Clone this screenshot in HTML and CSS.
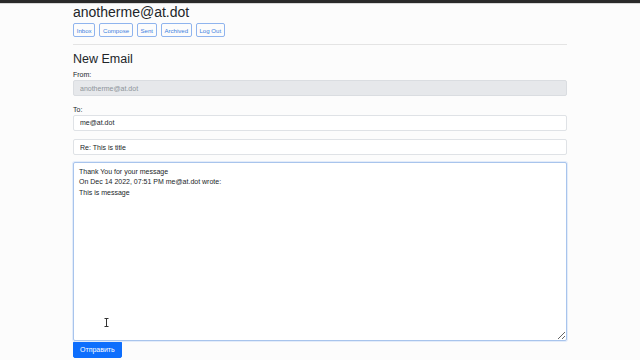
FILE: index.html
```html
<!DOCTYPE html>
<html>
<head>
<meta charset="utf-8">
<link rel="stylesheet" href="styles.css">
</head>
<body>
<div class="topbar"></div>
<div class="page">
  <h2 class="user">anotherme@at.dot</h2>
  <nav class="nav">
    <button class="btn-outline">Inbox</button>
    <button class="btn-outline">Compose</button>
    <button class="btn-outline">Sent</button>
    <button class="btn-outline">Archived</button>
    <button class="btn-outline">Log Out</button>
  </nav>
  <hr class="rule">
  <h3 class="heading">New Email</h3>
  <form class="form">
    <div class="group">
      <label class="label">From:</label>
      <input class="field field-disabled" value="anotherme@at.dot" disabled>
    </div>
    <div class="group">
      <label class="label">To:</label>
      <input class="field" value="me@at.dot">
    </div>
    <input class="field" value="Re: This is title">
    <div class="area-wrap">
      <textarea class="area">Thank You for your message
On Dec 14 2022, 07:51 PM me@at.dot wrote:
This is message</textarea>
      <svg class="ibeam" width="5" height="9" viewBox="0 0 5 9"><path d="M0.5 0.5h4M2.5 0.5v8M0.5 8.5h4" stroke="#333" stroke-width="1" fill="none"/></svg>
    </div>
    <button class="btn-primary" type="button">Отправить</button>
  </form>
</div>
</body>
</html>
```
FILE: styles.css
```css
html, body {
  margin: 0;
  padding: 0;
}
body {
  background: #fcfcfc;
  font-family: "Liberation Sans", Arial, sans-serif;
  color: #212529;
  width: 640px;
  height: 360px;
  overflow: hidden;
}
.topbar {
  height: 3px;
  background: #2a2a2a;
  border-bottom: 1px solid #d8d8d8;
}
.page {
  margin-left: 73px;
  width: 494px;
}
.user {
  margin: 0;
  font-size: 14px;
  font-weight: 400;
  line-height: 17px;
}
.nav {
  display: flex;
  gap: 4px;
  margin-top: 2px;
}
.btn-outline {
  height: 14px;
  padding: 0 2.7px;
  font-family: inherit;
  font-size: 6.1px;
  color: #3d7fe0;
  background: transparent;
  border: 1px solid #8fb4ee;
  border-radius: 2px;
}
.rule {
  margin: 7px 0 0;
  border: 0;
  border-top: 1px solid #e4e4e4;
}
.heading {
  margin: 7px 0 0;
  font-size: 12.5px;
  font-weight: 400;
  line-height: 14px;
}
.form {
  display: flex;
  flex-direction: column;
  gap: 7px;
  margin-top: 4px;
}
.group {
  display: flex;
  flex-direction: column;
  gap: 1px;
  margin-bottom: 1.5px;
}
.label {
  font-size: 7px;
  line-height: 9px;
}
.field {
  box-sizing: border-box;
  height: 16px;
  width: 100%;
  margin: 0;
  padding: 0 6px;
  font-family: inherit;
  font-size: 7px;
  color: #212529;
  background: #fff;
  border: 1px solid #dfe2e6;
  border-radius: 2px;
  outline: none;
}
.field-disabled {
  background: #e6e8eb;
  color: #8d949a;
  border-color: #dadde1;
}
.area-wrap {
  position: relative;
  height: 179px;
}
.area {
  box-sizing: border-box;
  display: block;
  width: 100%;
  height: 179px;
  margin: 0;
  padding: 4px 5px;
  font-family: inherit;
  font-size: 7px;
  line-height: 10.3px;
  color: #212529;
  background: #fff;
  border: 1px solid #a8c4ec;
  border-radius: 2px;
  box-shadow: 0 0 0 1px #e3ecfa;
  resize: vertical;
  outline: none;
}
.ibeam {
  position: absolute;
  left: 31px;
  top: 156px;
}
.btn-primary {
  align-self: flex-start;
  margin-top: -7px;
  height: 17px;
  padding: 0 6px;
  font-family: inherit;
  font-size: 7px;
  color: #fff;
  background: #0d6efd;
  border: 1px solid #0d6efd;
  border-radius: 2px;
}
```
